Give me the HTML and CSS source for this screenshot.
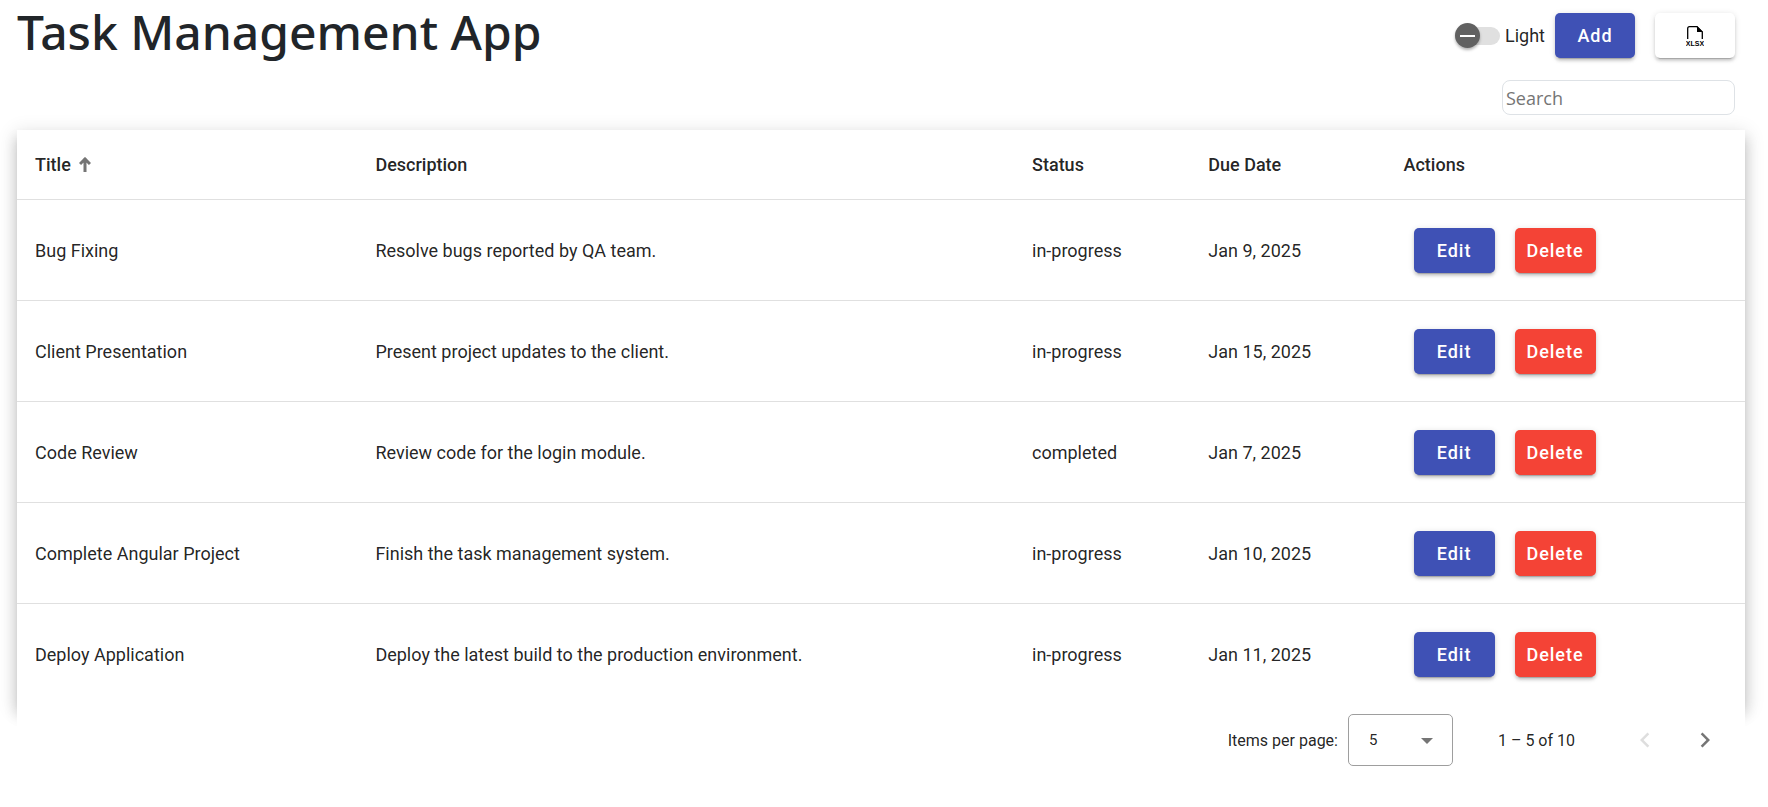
FILE: index.html
```html
<!DOCTYPE html>
<html lang="en">
<head>
<meta charset="utf-8">
<title>Task Management App</title>
<link rel="stylesheet" href="styles.css">
</head>
<body>
<header class="header">
  <h1 class="title">Task Management App</h1>
  <div class="tools">
    <div class="toolbar">
      <label class="toggle"><input class="switch" type="checkbox" role="switch">Light</label>
      <button class="btn primary" type="button">Add</button>
      <button class="btn plain" type="button" aria-label="Export XLSX">
        <svg class="file-icon" width="18" height="22" viewBox="0 0 18 22">
          <path d="M1.700 14V3.500Q1.700 1.700 3.500 1.700H11L16.300 7V14" fill="none" stroke="#000" stroke-width="1.300"/>
          <path d="M11 1V7H17Z"/>
          <text x="9" y="21" text-anchor="middle">XLSX</text>
        </svg>
      </button>
    </div>
    <input class="search" type="text" placeholder="Search" aria-label="Search">
  </div>
</header>
<main>
  <table class="tasks">
    <colgroup><col class="c-title"><col class="c-desc"><col class="c-status"><col class="c-date"><col></colgroup>
    <thead>
      <tr>
        <th scope="col" aria-sort="ascending"><span class="sorted">Title
          <svg width="12" height="15" viewBox="0 0 12 15"><path d="M6 1V15M1 7L6 2L11 7" fill="none" stroke="#757575" stroke-width="3"/></svg></span></th>
        <th scope="col">Description</th><th scope="col">Status</th><th scope="col">Due Date</th><th scope="col">Actions</th>
      </tr>
    </thead>
    <tbody>
      <tr><td>Bug Fixing</td><td>Resolve bugs reported by QA team.</td><td>in-progress</td><td>Jan 9, 2025</td>
        <td><div class="actions"><button class="btn primary" type="button">Edit</button><button class="btn warn" type="button">Delete</button></div></td></tr>
      <tr><td>Client Presentation</td><td>Present project updates to the client.</td><td>in-progress</td><td>Jan 15, 2025</td>
        <td><div class="actions"><button class="btn primary" type="button">Edit</button><button class="btn warn" type="button">Delete</button></div></td></tr>
      <tr><td>Code Review</td><td>Review code for the login module.</td><td>completed</td><td>Jan 7, 2025</td>
        <td><div class="actions"><button class="btn primary" type="button">Edit</button><button class="btn warn" type="button">Delete</button></div></td></tr>
      <tr><td>Complete Angular Project</td><td>Finish the task management system.</td><td>in-progress</td><td>Jan 10, 2025</td>
        <td><div class="actions"><button class="btn primary" type="button">Edit</button><button class="btn warn" type="button">Delete</button></div></td></tr>
      <tr><td>Deploy Application</td><td>Deploy the latest build to the production environment.</td><td>in-progress</td><td>Jan 11, 2025</td>
        <td><div class="actions"><button class="btn primary" type="button">Edit</button><button class="btn warn" type="button">Delete</button></div></td></tr>
    </tbody>
  </table>
  <nav class="paginator" aria-label="Pagination">
    <label for="page-size">Items per page:</label>
    <div class="select-box">
      <select id="page-size" class="page-size"><option>5</option><option>10</option><option>20</option></select>
      <svg class="caret" width="12" height="6" viewBox="0 0 12 6"><path d="M0 0H12L6 6Z" fill="#757575"/></svg>
    </div>
    <span class="range">1 – 5 of 10</span>
    <button class="page-btn" type="button" aria-label="Previous page" disabled>
      <svg width="30" height="30" viewBox="0 0 24 24"><path d="M15.410 7.410L14 6l-6 6 6 6 1.410-1.410L10.830 12z"/></svg>
    </button>
    <button class="page-btn" type="button" aria-label="Next page">
      <svg width="30" height="30" viewBox="0 0 24 24"><path d="M10 6L8.590 7.410 13.170 12l-4.580 4.590L10 18l6-6z"/></svg>
    </button>
  </nav>
</main>
</body>
</html>
```
FILE: styles.css
```css
*, *::before, *::after { box-sizing: border-box; }

body {
  margin: 0;
  padding: 0 23px 0 17px;
  background: #fff;
  color: rgba(0, 0, 0, 0.87);
  font-family: Roboto, sans-serif;
  font-size: 18px;
}

.header {
  display: flex;
  justify-content: space-between;
  align-items: flex-start;
  padding: 0 10px 15px 0;
}

.title {
  margin: 0;
  color: #212529;
  font-family: "Noto Sans", sans-serif;
  font-size: 48px;
  font-weight: 500;
  line-height: 64px;
}

.tools {
  display: flex;
  flex-direction: column;
  align-items: flex-end;
  gap: 22px;
  padding-top: 13px;
}

.toolbar { display: flex; align-items: center; }
.toolbar .btn { margin-left: 20px; }
.toolbar .primary { margin-left: 10px; }

.toggle { display: flex; align-items: center; gap: 5px; }

.switch {
  appearance: none;
  position: relative;
  width: 45px;
  height: 18px;
  margin: 0;
  border-radius: 9px;
  background: #e0e0e0;
}
.switch::before {
  content: "";
  position: absolute;
  top: -4px;
  left: 0;
  width: 25px;
  height: 25px;
  border-radius: 50%;
  background: #616161;
  box-shadow: 0 2px 3px rgba(0, 0, 0, 0.3);
}
.switch::after {
  content: "";
  position: absolute;
  top: 8px;
  left: 5px;
  width: 15px;
  height: 2px;
  background: #fff;
}

.btn {
  display: flex;
  align-items: center;
  justify-content: center;
  width: 80px;
  height: 45px;
  padding: 0;
  border: 0;
  border-radius: 5px;
  font: 500 18px Roboto, sans-serif;
  letter-spacing: 1px;
  color: #fff;
  box-shadow: 0 4px 1px -3px rgba(0, 0, 0, 0.2), 0 3px 3px rgba(0, 0, 0, 0.14), 0 1px 6px rgba(0, 0, 0, 0.12);
}
.primary { background: #3f51b5; }
.warn { background: #f44336; }
.plain { background: #fff; color: #000; }

.file-icon { font: 700 7px "Liberation Sans", sans-serif; letter-spacing: 0; }

.search {
  width: 233px;
  height: 35px;
  padding: 0 3px;
  border: 1px solid #dee2e6;
  border-radius: 8px;
  background: #fff;
  font: 18px "Open Sans", sans-serif;
}
.search::placeholder { color: #757575; }

.tasks {
  width: 100%;
  table-layout: fixed;
  border-collapse: separate;
  border-spacing: 0;
  background: #fff;
  box-shadow: 0 6px 6px -4px rgba(0, 0, 0, 0.2), 0 10px 12px 1px rgba(0, 0, 0, 0.14), 0 4px 18px 2px rgba(0, 0, 0, 0.12);
}
.c-title { width: 19.700%; }
.c-desc { width: 38%; }
.c-status { width: 10.200%; }
.c-date { width: 11.300%; }

.tasks th, .tasks td {
  padding: 0 18px;
  text-align: left;
  border-bottom: 1px solid #e0e0e0;
}
.tasks th { height: 70px; font-weight: 500; }
.tasks td { height: 101px; }
.tasks tr:last-child td { border-bottom: 0; }

.sorted { display: flex; align-items: center; gap: 8px; }

.actions { display: flex; gap: 20px; padding-left: 10px; }
.actions .btn { width: 81px; }

.paginator {
  position: relative;
  display: flex;
  align-items: center;
  justify-content: flex-end;
  min-height: 70px;
  padding-right: 10px;
  background: #fff;
  font-size: 16px;
}

.select-box { position: relative; margin: 0 45px 0 10px; }
.page-size {
  appearance: none;
  width: 105px;
  height: 52px;
  padding: 0 20px;
  border: 1px solid #9e9e9e;
  border-radius: 5px;
  background: #fff;
  color: inherit;
  font: 15px Roboto, sans-serif;
}
.caret { position: absolute; right: 20px; top: 24px; pointer-events: none; }

.range { margin-right: 40px; }

.page-btn {
  display: flex;
  align-items: center;
  justify-content: center;
  width: 60px;
  height: 60px;
  padding: 0;
  border: 0;
  background: none;
  fill: #757575;
}
.page-btn:disabled { fill: #dedede; }
```
